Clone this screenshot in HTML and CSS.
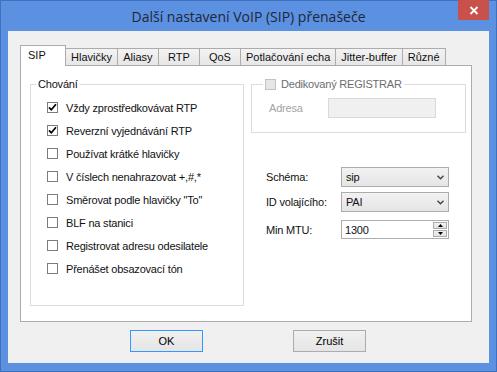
FILE: index.html
```html
<!DOCTYPE html>
<html lang="cs">

<head>
    <meta charset="UTF-8">
    <title>Další nastavení VoIP (SIP) přenašeče</title>
    <link rel="stylesheet" href="styles.css">
</head>

<body>
    <div class="window">
        <div class="titlebar">
            <span></span>
            <span class="title">Další nastavení VoIP (SIP) přenašeče</span>
            <span class="close-btn">
                <svg width="10" height="9" viewBox="0 0 10 9">
                    <path d="M1.5 1 L8.5 8 M8.5 1 L1.5 8" stroke="#fff" stroke-width="1.8" />
                </svg>
            </span>
        </div>

        <div class="client">
            <div class="tabs">
                <div class="tab active">SIP</div>
                <div class="tab">Hlavičky</div>
                <div class="tab">Aliasy</div>
                <div class="tab">RTP</div>
                <div class="tab">QoS</div>
                <div class="tab">Potlačování echa</div>
                <div class="tab">Jitter-buffer</div>
                <div class="tab">Různé</div>
            </div>

            <div class="panel">
                <!-- levý sloupec -->
                <fieldset class="group behaviour">
                    <legend>Chování</legend>
                    <div class="check"><span class="box"><svg width="11" height="11" viewBox="0 0 11 11"><path d="M2 5.3 L4.3 7.8 L9 2.3" fill="none" stroke="#000" stroke-width="1.7" /></svg></span>Vždy zprostředkovávat RTP</div>
                    <div class="check"><span class="box"><svg width="11" height="11" viewBox="0 0 11 11"><path d="M2 5.3 L4.3 7.8 L9 2.3" fill="none" stroke="#000" stroke-width="1.7" /></svg></span>Reverzní vyjednávání RTP</div>
                    <div class="check"><span class="box"></span>Používat krátké hlavičky</div>
                    <div class="check"><span class="box"></span>V číslech nenahrazovat +,#,*</div>
                    <div class="check"><span class="box"></span>Směrovat podle hlavičky "To"</div>
                    <div class="check"><span class="box"></span>BLF na stanici</div>
                    <div class="check"><span class="box"></span>Registrovat adresu odesilatele</div>
                    <div class="check"><span class="box"></span>Přenášet obsazovací tón</div>
                </fieldset>

                <!-- pravý sloupec -->
                <div class="side">
                    <fieldset class="group registrar">
                        <legend><span class="box disabled"></span>Dedikovaný REGISTRAR</legend>
                        <div class="field">
                            <span class="muted">Adresa</span>
                            <span class="edit disabled"></span>
                        </div>
                    </fieldset>

                    <div class="form-row">
                        <span class="lbl">Schéma:</span>
                        <div class="combo">sip
                            <svg width="7" height="5" viewBox="0 0 7 5"><path d="M0.5 0.8 L3.5 3.8 L6.5 0.8" fill="none" stroke="#444" stroke-width="1.4" /></svg>
                        </div>
                    </div>
                    <div class="form-row">
                        <span class="lbl">ID volajícího:</span>
                        <div class="combo">PAI
                            <svg width="7" height="5" viewBox="0 0 7 5"><path d="M0.5 0.8 L3.5 3.8 L6.5 0.8" fill="none" stroke="#444" stroke-width="1.4" /></svg>
                        </div>
                    </div>
                    <div class="form-row mtu">
                        <span class="lbl">Min MTU:</span>
                        <div class="edit spin">1300
                            <span class="spinner">
                                <span class="arrow"><svg width="5" height="3" viewBox="0 0 5 3"><path d="M0 3 L2.5 0 L5 3 Z" fill="#000" /></svg></span>
                                <span class="arrow"><svg width="5" height="3" viewBox="0 0 5 3"><path d="M0 0 L2.5 3 L5 0 Z" fill="#000" /></svg></span>
                            </span>
                        </div>
                    </div>
                </div>
            </div>

            <div class="buttons">
                <button class="btn default">OK</button>
                <button class="btn">Zrušit</button>
            </div>
        </div>
    </div>
</body>

</html>
```

FILE: styles.css
```css
* {
    margin: 0;
    padding: 0;
    box-sizing: border-box;
}

body {
    background: #fff;
    font-family: 'Liberation Sans', Arial, sans-serif;
    font-size: 11px;
    letter-spacing: -0.2px;
    color: #111;
}

.window {
    width: 497px;
    height: 372px;
    background: #5c90e1;
    border: 1px solid #3f6fbf;
    padding: 0 7px 8px 7px;
}

.titlebar {
    height: 30px;
    display: grid;
    grid-template-columns: 1fr auto 1fr;
}

.title {
    font-family: 'Open Sans', sans-serif;
    font-size: 14px;
    letter-spacing: 0;
    color: #1c2838;
    line-height: 30px;
    padding-top: 1px;
}

.close-btn {
    justify-self: end;
    width: 31px;
    height: 20px;
    margin-top: -1px;
    background: #c9514c;
    display: flex;
    align-items: center;
    justify-content: center;
}

.client {
    height: 332px;
    background: #f0f0f0;
    padding: 14px 0 0 12px;
}

/* záložky */
.tabs {
    display: flex;
    align-items: flex-end;
    height: 20px;
    position: relative;
    z-index: 1;
}

.tab {
    height: 17px;
    min-width: 42px;
    padding: 0 5px;
    margin-left: -1px;
    border: 1px solid #acacac;
    border-bottom: none;
    background: linear-gradient(#f3f3f3, #e6e6e6);
    text-align: center;
    line-height: 16px;
    letter-spacing: 0;
    white-space: nowrap;
}

.tab.active {
    height: 21px;
    margin: 0 0 -1px 0;
    width: 46px;
    background: #fff;
    text-align: left;
    padding-left: 7px;
    line-height: 18px;
}

.panel {
    width: 452px;
    height: 257px;
    background: #fff;
    border: 1px solid #acacac;
    padding: 12px 0 0 9px;
    display: flex;
    align-items: flex-start;
}

/* skupiny */
.group {
    border: 1px solid #dcdcdc;
}

.group legend {
    padding: 0 2px;
    line-height: 13px;
}

.behaviour {
    width: 214px;
    padding: 5px 0 25px 16px;
}

.behaviour legend {
    margin-left: -11px;
}

.check {
    height: 23px;
    display: flex;
    align-items: center;
}

.box {
    width: 11px;
    height: 11px;
    border: 1px solid #7c7c7c;
    background: #fff;
    margin-right: 8px;
    display: flex;
    align-items: center;
    justify-content: center;
    flex: none;
}

.box svg {
    margin: -1px;
}

.side {
    margin-left: 7px;
    width: 215px;
}

.registrar {
    padding: 7px 0 14px 17px;
}

.registrar legend {
    margin-left: -6px;
    display: flex;
    align-items: center;
    color: #6d6d6d;
}

.box.disabled {
    border-color: #c2c2c2;
    background: #e6e6e6;
    margin-right: 5px;
}

.field {
    display: flex;
    align-items: center;
}

.muted {
    color: #a3a3a3;
    width: 59px;
}

.edit {
    width: 108px;
    height: 20px;
    border: 1px solid #abadb3;
    background: #fff;
}

.edit.disabled {
    background: #f0f0f0;
    border-color: #d9d9d9;
}

.form-row {
    display: flex;
    align-items: center;
    margin-top: 5px;
    padding-left: 15px;
}

.side .form-row:first-of-type {
    margin-top: 34px;
}

.lbl {
    width: 75px;
}

.combo {
    width: 108px;
    height: 20px;
    border: 1px solid #acacac;
    background: linear-gradient(#f2f2f2, #e5e5e5);
    display: flex;
    align-items: center;
    justify-content: space-between;
    padding: 0 4px 0 4px;
}

.form-row.mtu {
    margin-top: 8px;
}

.edit.spin {
    height: 19px;
    display: flex;
    align-items: center;
    justify-content: space-between;
    padding: 0 1px 0 3px;
}

.spinner {
    display: flex;
    flex-direction: column;
    gap: 1px;
}

.arrow {
    width: 14px;
    height: 7px;
    border: 1px solid #acacac;
    background: linear-gradient(#f2f2f2, #e2e2e2);
    display: flex;
    align-items: center;
    justify-content: center;
}

/* tlačítka */
.buttons {
    display: flex;
    gap: 90px;
    margin-top: 8px;
    padding-left: 110px;
}

.btn {
    width: 73px;
    height: 22px;
    border: 1px solid #acacac;
    background: linear-gradient(#f0f0f0, #e5e5e5);
    font-family: 'Liberation Sans', Arial, sans-serif;
    font-size: 11px;
    color: #000;
}

.btn.default {
    border-color: #3399ff;
}
```
